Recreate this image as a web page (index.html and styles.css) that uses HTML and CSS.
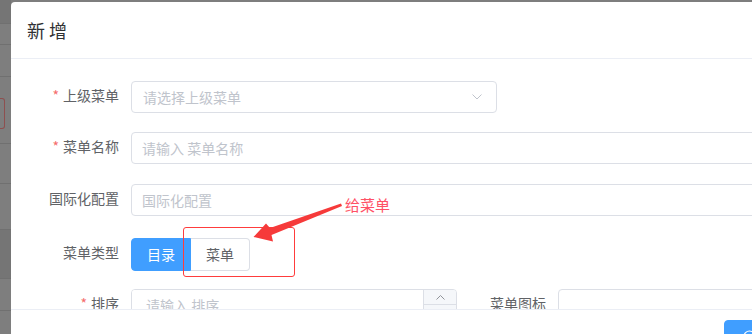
FILE: index.html
```html
<!DOCTYPE html>
<html lang="zh-CN">

<head>
  <meta charset="UTF-8">
  <meta name="viewport" content="width=device-width, initial-scale=1.0">
  <title>新增菜单</title>
  <link rel="stylesheet" href="styles.css">
</head>

<body>
  <div class="page">
    <!-- 遮罩下面的列表页 -->
    <div class="backdrop">
      <div class="bg-row dark"></div>
      <div class="bg-row"></div>
      <div class="bg-row"></div>
      <div class="bg-row"><span class="bg-btn"></span></div>
      <div class="bg-row"></div>
      <div class="bg-row"></div>
      <div class="bg-row dark"></div>
      <div class="bg-row"></div>
      <div class="bg-row"></div>
    </div>

    <div class="dialog">
      <div class="dialog-header">
        <span class="dialog-title">新 增</span>
      </div>

      <div class="dialog-body">
        <form class="form">
          <div class="form-item first">
            <label class="form-label required">上级菜单</label>
            <div class="select">
              <span class="select-text">请选择上级菜单</span>
              <svg class="chevron" width="10" height="6" viewBox="0 0 10 6">
                <polyline points="0.5,0.5 5,5 9.5,0.5" fill="none" stroke="#c0c4cc" stroke-width="1" />
              </svg>
            </div>
          </div>

          <div class="form-item">
            <label class="form-label required">菜单名称</label>
            <input class="input grow" type="text" placeholder="请输入 菜单名称">
          </div>

          <div class="form-item">
            <label class="form-label">国际化配置</label>
            <input class="input grow" type="text" placeholder="国际化配置">
          </div>

          <div class="form-item type-row">
            <label class="form-label">菜单类型</label>
            <div class="radio-group">
              <span class="radio-btn active">目录</span>
              <span class="radio-btn">菜单</span>
            </div>
          </div>

          <div class="form-row">
            <div class="form-item col-left">
              <label class="form-label required">排序</label>
              <div class="number">
                <input class="number-input" type="text" placeholder="请输入 排序">
                <div class="number-controls">
                  <span class="number-up">
                    <svg width="9" height="5" viewBox="0 0 9 5">
                      <polyline points="0.5,4.5 4.5,0.5 8.5,4.5" fill="none" stroke="#909399" stroke-width="1" />
                    </svg>
                  </span>
                  <span class="number-down"></span>
                </div>
              </div>
            </div>
            <div class="form-item col-right">
              <label class="form-label">菜单图标</label>
              <input class="input grow" type="text">
            </div>
          </div>
        </form>
      </div>

      <div class="dialog-footer">
        <button class="btn btn-primary" type="button">
          <svg width="13" height="13" viewBox="0 0 13 13">
            <circle cx="6.5" cy="6.5" r="5.5" fill="none" stroke="#fff" stroke-width="1.2" />
            <polyline points="4,6.8 5.8,8.5 9,5" fill="none" stroke="#fff" stroke-width="1.2" />
          </svg>
          确 定
        </button>
        <button class="btn" type="button">取 消</button>
      </div>
    </div>

    <!-- 截图上的标注 -->
    <div class="annot">
      <div class="annot-box"></div>
      <span class="annot-text">给菜单</span>
      <svg class="annot-arrow" width="752" height="334" viewBox="0 0 752 334">
        <polygon points="341,203.5 270,228 266,223.5 253.5,237 273,241.5 271.5,235 342,206" fill="#f63a3a" />
      </svg>
    </div>
  </div>
</body>

</html>
```

FILE: styles.css
```css
* {
  box-sizing: border-box;
}

html,
body {
  margin: 0;
  height: 334px;
  overflow: hidden;
}

body {
  font-family: "Noto Sans CJK SC", "Noto Sans", sans-serif;
  background: #7e7e7e;
  color: #606266;
}

.page {
  position: relative;
  display: flex;
  height: 334px;
}

/* 遮罩 */
.backdrop {
  width: 11px;
  flex-shrink: 0;
  display: flex;
  flex-direction: column;
}

.bg-row {
  border-bottom: 1px solid #707070;
  background: #7e7e7e;
}

.bg-row.dark {
  background: #757575;
}

.bg-row:nth-child(1) { height: 24px; }
.bg-row:nth-child(2) { height: 21px; }
.bg-row:nth-child(3) { height: 32px; }
.bg-row:nth-child(4) { height: 67px; padding-top: 21px; }
.bg-row:nth-child(5) { height: 40px; }
.bg-row:nth-child(6) { height: 46px; }
.bg-row:nth-child(7) { height: 49px; }
.bg-row:nth-child(8) { height: 32px; }
.bg-row:nth-child(9) { flex: 1; border-bottom: none; }

.bg-btn {
  display: block;
  width: 5px;
  height: 31px;
  border: 1px solid #8e4f4f;
  border-left: none;
  border-radius: 0 3px 3px 0;
}

/* 弹窗 */
.dialog {
  width: 899px;
  flex-shrink: 0;
  margin-top: 2px;
  background: #ffffff;
  border-radius: 4px 0 0 0;
}

.dialog-header {
  height: 57px;
  padding: 0 16px;
  border-bottom: 1px solid #ebeef5;
  display: flex;
  align-items: center;
}

.dialog-title {
  font-size: 18px;
  color: #303133;
  line-height: 24px;
  margin-top: -1px;
}

.dialog-body {
  height: 250px;
  padding: 22px 20px 0;
  overflow: hidden;
}

.form-item {
  display: flex;
  align-items: flex-start;
  margin-bottom: 20px;
}

.form-item.first {
  margin-bottom: 19px;
}

.form-item.type-row {
  padding-top: 2px;
  margin-bottom: 18px;
}

.form-label {
  width: 100px;
  flex-shrink: 0;
  padding-right: 12px;
  text-align: right;
  font-size: 14px;
  line-height: 29px;
  color: #606266;
}

.form-label.required::before {
  content: "*";
  color: #f56c6c;
  margin-right: 4px;
}

.input {
  height: 32px;
  border: 1px solid #dcdfe6;
  border-radius: 4px;
  padding: 0 10px;
  font-family: inherit;
  font-size: 14px;
  color: #606266;
  outline: none;
}

.input::placeholder,
.number-input::placeholder {
  color: #c0c4cc;
}

.grow {
  flex: 1;
  min-width: 0;
}

.select {
  width: 366px;
  height: 32px;
  border: 1px solid #dcdfe6;
  border-radius: 4px;
  padding: 0 14px 0 11px;
  display: flex;
  align-items: center;
  justify-content: space-between;
  font-size: 14px;
  color: #c0c4cc;
}

.select-text {
  margin-top: -1px;
}

.chevron {
  display: block;
}

.radio-group {
  display: flex;
}

.radio-btn {
  height: 33px;
  line-height: 31px;
  font-size: 14px;
  text-align: center;
  border: 1px solid #dcdfe6;
  color: #606266;
  background: #fff;
}

.radio-btn:first-child {
  width: 60px;
  border-radius: 4px 0 0 4px;
}

.radio-btn:last-child {
  width: 59px;
  border-left: none;
  border-radius: 0 4px 4px 0;
}

.radio-btn.active {
  background: #409eff;
  border-color: #409eff;
  color: #fff;
}

.form-row {
  display: flex;
}

.col-left {
  width: 427px;
  flex-shrink: 0;
}

.col-right {
  flex: 1;
}

.number {
  width: 326px;
  height: 32px;
  border: 1px solid #dcdfe6;
  border-radius: 4px;
  display: flex;
  overflow: hidden;
}

.number-input {
  flex: 1;
  min-width: 0;
  border: none;
  padding: 0 14px;
  font-family: inherit;
  font-size: 14px;
  outline: none;
}

.number-controls {
  width: 33px;
  display: flex;
  flex-direction: column;
  background: #f5f7fa;
  border-left: 1px solid #dcdfe6;
}

.number-up {
  height: 15px;
  display: flex;
  align-items: center;
  justify-content: center;
  border-bottom: 1px solid #dcdfe6;
}

.number-down {
  flex: 1;
}

.dialog-footer {
  border-top: 1px solid #ebeef5;
  padding: 10px 20px 0;
  display: flex;
  justify-content: flex-end;
  gap: 10px;
}

.btn {
  height: 32px;
  width: 72px;
  border: 1px solid #dcdfe6;
  border-radius: 4px;
  background: #fff;
  color: #606266;
  font-family: inherit;
  font-size: 13px;
  display: flex;
  align-items: center;
  justify-content: center;
  gap: 5px;
}

.btn-primary {
  width: 84px;
  background: #409eff;
  border-color: #409eff;
  color: #fff;
  justify-content: flex-start;
  padding-left: 18px;
}

/* 标注 */
.annot {
  position: absolute;
  inset: 0;
  pointer-events: none;
}

.annot-box {
  position: absolute;
  left: 183px;
  top: 227px;
  width: 112px;
  height: 50px;
  border: 1px solid #ff3c3c;
  border-radius: 3px;
}

.annot-text {
  position: absolute;
  left: 345px;
  top: 195px;
  font-size: 15px;
  line-height: 20px;
  color: #ff5166;
}

.annot-arrow {
  position: absolute;
  left: 0;
  top: 0;
}
```
